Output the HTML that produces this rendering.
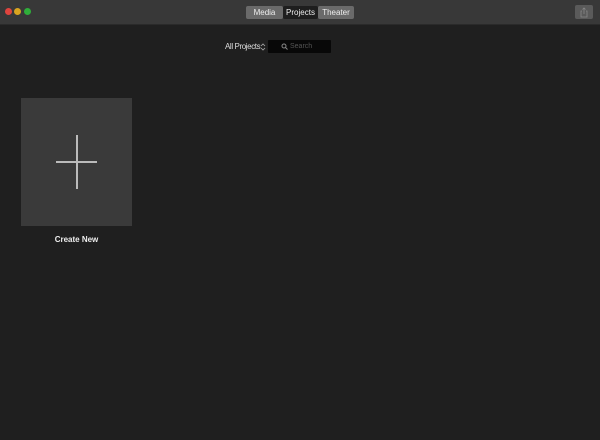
<!DOCTYPE html><html><head><style>
body{margin:0;width:600px;height:440px;background:#1f1f1f;font-family:"Liberation Sans",sans-serif;overflow:hidden;position:relative}
.tb{position:absolute;left:0;top:0;width:600px;height:24px;background:#383838;border-bottom:1px solid #2a2a2a}
.d{position:absolute;top:8px;width:7px;height:7px;border-radius:50%}
.seg{position:absolute;top:6px;height:13px;font-size:8px;color:#eee;text-align:center;line-height:13px;border-radius:2px}
</style></head><body>
<div class="tb">
<div class="d" style="left:5px;background:#e0443e"></div>
<div class="d" style="left:14px;background:#d9a420"></div>
<div class="d" style="left:24px;background:#2fae3a"></div>
<div class="seg" style="left:246px;width:37px;background:#6a6a6a">Media</div>
<div class="seg" style="left:283px;width:35px;background:#1e1e1e">Projects</div>
<div class="seg" style="left:318px;width:36px;background:#6a6a6a">Theater</div>
<div style="position:absolute;left:575px;top:5px;width:18px;height:14px;background:#5a5a5a;border-radius:2px"></div>
<svg style="position:absolute;left:579px;top:6px" width="10" height="12"><path d="M3 5H2V11H8V5H7M5 2V8M3.5 3.5L5 2L6.5 3.5" stroke="#888" fill="none" stroke-width="0.8"/></svg>
</div>
<div style="position:absolute;left:225px;top:42px;font-size:8px;color:#ddd;letter-spacing:-0.4px">All Projects</div>
<svg style="position:absolute;left:260px;top:42px" width="6" height="10"><path d="M1 4L3 2L5 4M1 6L3 8L5 6" stroke="#aaa" fill="none" stroke-width="0.8"/></svg>
<div style="position:absolute;left:268px;top:40px;width:63px;height:13px;background:#080808;border-radius:1px;font-size:7px;color:#555;line-height:13px"><svg style="position:absolute;left:13px;top:3px" width="7" height="7"><circle cx="3" cy="3" r="2" stroke="#888" fill="none"/><path d="M4.5 4.5L6.5 6.5" stroke="#888"/></svg><span style="margin-left:22px">Search</span></div>
<div style="position:absolute;left:21px;top:98px;width:111px;height:128px;background:#3a3a3a"></div>
<div style="position:absolute;left:56px;top:161px;width:41px;height:2px;background:#bbb"></div>
<div style="position:absolute;left:76px;top:135px;width:2px;height:54px;background:#bbb"></div>
<div style="position:absolute;left:21px;top:235px;width:111px;text-align:center;font-size:8px;font-weight:bold;color:#eee">Create New</div>
</body></html>
